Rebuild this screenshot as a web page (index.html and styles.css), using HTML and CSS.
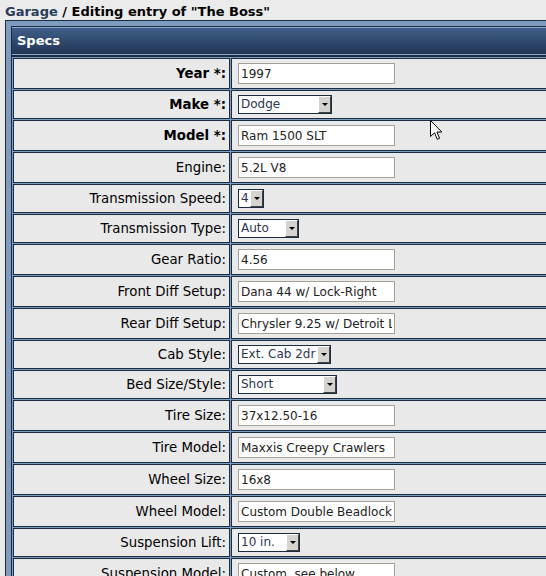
FILE: index.html
```html
<!DOCTYPE html>
<html>
<head>
<meta charset="utf-8">
<title>Garage / Editing entry</title>
<link rel="stylesheet" href="styles.css">
</head>
<body>
<h1 class="title"><a class="crumb" href="#">Garage</a> / Editing entry of "The Boss"</h1>
<div class="panel">
  <div class="panel-head">Specs</div>
  <table class="specs">
    <tr><th class="req">Year *:</th><td><input class="text" value="1997"></td></tr>
    <tr><th class="req">Make *:</th><td><span class="select w-make"><span class="select-value">Dodge</span><span class="select-btn"></span></span></td></tr>
    <tr><th class="req">Model *:</th><td><input class="text" value="Ram 1500 SLT"></td></tr>
    <tr><th>Engine:</th><td><input class="text" value="5.2L V8"></td></tr>
    <tr><th>Transmission Speed:</th><td><span class="select w-tiny"><span class="select-value">4</span><span class="select-btn"></span></span></td></tr>
    <tr><th>Transmission Type:</th><td><span class="select w-auto"><span class="select-value">Auto</span><span class="select-btn"></span></span></td></tr>
    <tr><th>Gear Ratio:</th><td><input class="text" value="4.56"></td></tr>
    <tr><th>Front Diff Setup:</th><td><input class="text" value="Dana 44 w/ Lock-Right"></td></tr>
    <tr><th>Rear Diff Setup:</th><td><input class="text" value="Chrysler 9.25 w/ Detroit Locker"></td></tr>
    <tr><th>Cab Style:</th><td><span class="select w-cab"><span class="select-value">Ext. Cab 2dr</span><span class="select-btn"></span></span></td></tr>
    <tr><th>Bed Size/Style:</th><td><span class="select w-bed"><span class="select-value">Short</span><span class="select-btn"></span></span></td></tr>
    <tr><th>Tire Size:</th><td><input class="text" value="37x12.50-16"></td></tr>
    <tr><th>Tire Model:</th><td><input class="text" value="Maxxis Creepy Crawlers"></td></tr>
    <tr><th>Wheel Size:</th><td><input class="text" value="16x8"></td></tr>
    <tr><th>Wheel Model:</th><td><input class="text" value="Custom Double Beadlock"></td></tr>
    <tr><th>Suspension Lift:</th><td><span class="select w-lift"><span class="select-value">10 in.</span><span class="select-btn"></span></span></td></tr>
    <tr><th>Suspension Model:</th><td><input class="text" value="Custom, see below"></td></tr>
    <tr><th>Suspension Notes:</th><td><input class="text" value=""></td></tr>
  </table>
</div>
<svg class="cursor" width="14" height="21" viewBox="0 0 14 21"><path d="M0.5 0.5 L0.5 16.5 L4.5 12.8 L7.3 19.3 L9.6 18.3 L6.9 12 L11.8 12 Z" fill="#fff" stroke="#000" stroke-width="1" stroke-linejoin="miter"/></svg>
</body>
</html>
```
FILE: styles.css
```css
html, body {
  margin: 0;
  padding: 0;
  background: #ebebeb;
  overflow: hidden;
}
body {
  position: relative;
  padding-left: 5px;
  font-family: "DejaVu Sans", Verdana, sans-serif;
  font-size: 13px;
  color: #000;
}
.title {
  margin: 4px 0 0;
  font-size: 13px;
  line-height: 16px;
  font-weight: bold;
  white-space: nowrap;
}
.crumb {
  color: #2a3d5a;
  text-decoration: none;
}
.panel {
  width: 640px;
  border: 1px solid #1b2b40;
  background: #7e9bc0;
  padding: 5px;
}
.panel-head {
  border: 1px solid #1b2b40;
  background: linear-gradient(#41608a, #1f3452);
  box-shadow: inset 0 1px #8eaad0, inset 0 -1px #8eaad0;
  color: #fff;
  font-weight: bold;
  font-size: 13px;
  line-height: 28px;
  padding: 0 5px;
}
.specs {
  width: 100%;
  border: 1px solid #1b2b40;
  border-collapse: separate;
  border-spacing: 1px;
  background: #7e9bc0;
}
.specs th,
.specs td {
  border: 1px solid #1b2b40;
  background: #e9e9e9;
  vertical-align: middle;
}
.specs th {
  width: 208px;
  padding: 4px 3px 4px 4px;
  text-align: right;
  font-weight: normal;
  font-size: 13.33px;
  line-height: 15px;
  white-space: nowrap;
}
.specs th.req {
  font-weight: bold;
}
.specs td {
  padding: 4px 5px 4px 6px;
}
.text {
  display: block;
  box-sizing: border-box;
  width: 157px;
  height: 21px;
  margin: 0;
  padding: 0 2px;
  border: 1px solid #a59f94;
  background: #fff;
  font-family: "DejaVu Sans", Verdana, sans-serif;
  font-size: 12px;
  color: #222;
  outline: none;
}
.select {
  display: flex;
  box-sizing: border-box;
  height: 19px;
  border: 1px solid #1b2b40;
  background: #fff;
  font-size: 12px;
}
.select-value {
  flex: 1;
  min-width: 0;
  overflow: hidden;
  white-space: nowrap;
  padding-left: 2px;
  line-height: 17px;
  color: #2a3550;
}
.select-btn {
  flex: none;
  box-sizing: border-box;
  width: 13px;
  height: 17px;
  display: flex;
  align-items: center;
  justify-content: center;
  background: #d6d3ce;
  border-top: 1px solid #fff;
  border-left: 1px solid #fff;
  border-right: 1px solid #404040;
  border-bottom: 1px solid #404040;
}
.select-btn::after {
  content: "";
  width: 0;
  height: 0;
  border-left: 3px solid transparent;
  border-right: 3px solid transparent;
  border-top: 3px solid #000;
}
.w-make { width: 94px; }
.w-tiny { width: 26px; }
.w-auto { width: 61px; }
.w-cab { width: 93px; }
.w-bed { width: 99px; }
.w-lift { width: 62px; }
.cursor {
  position: absolute;
  left: 430px;
  top: 120px;
}
```
